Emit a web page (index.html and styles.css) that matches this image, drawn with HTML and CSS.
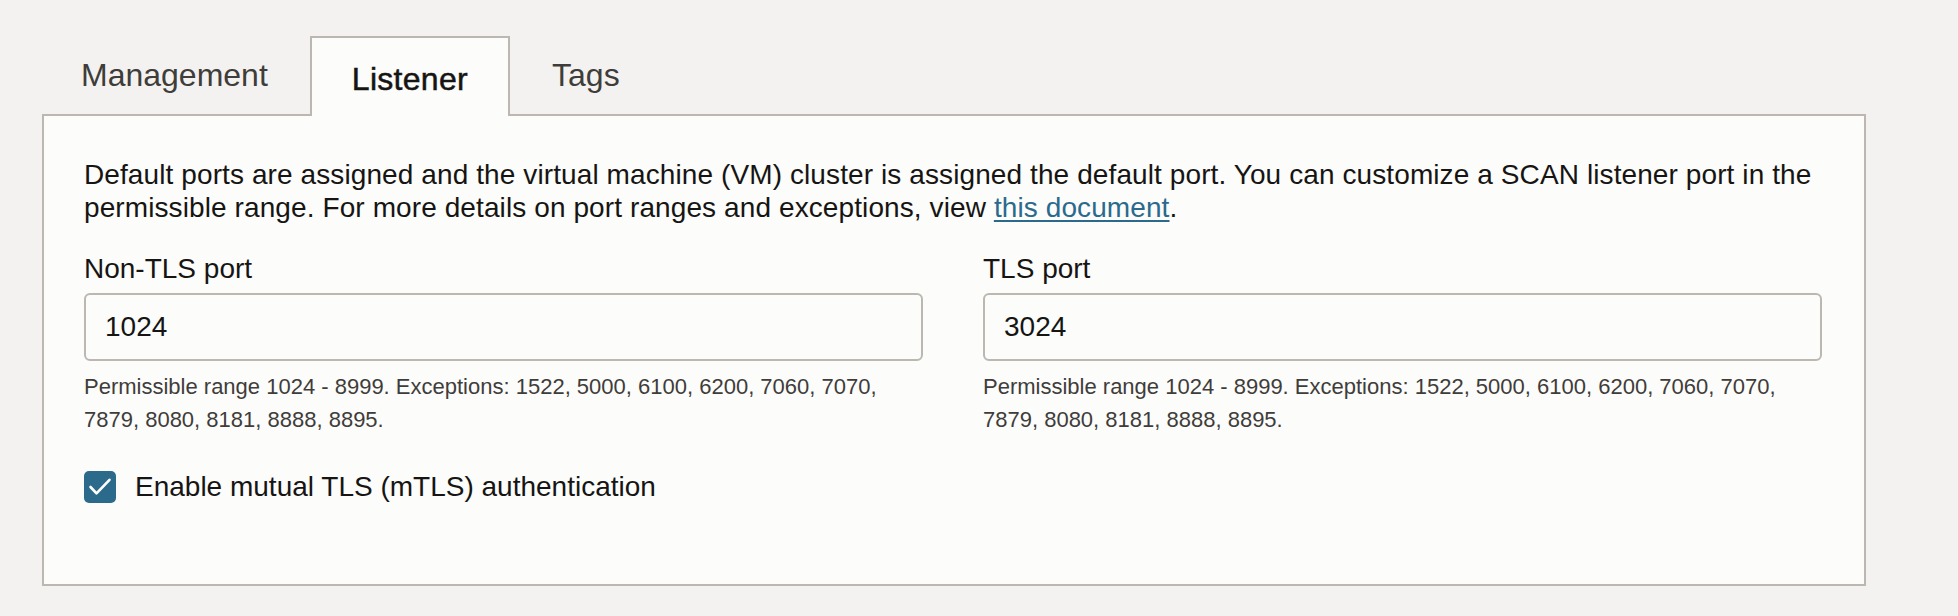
FILE: index.html
```html
<!DOCTYPE html>
<html lang="en">
<head>
<meta charset="utf-8">
<title>Listener</title>
<link rel="stylesheet" href="styles.css">
</head>
<body>
<div class="page">
  <div class="tabs">
    <div class="tab">Management</div>
    <div class="tab tab-active">Listener</div>
    <div class="tab">Tags</div>
  </div>
  <div class="panel">
    <p class="intro">Default ports are assigned and the virtual machine (VM) cluster is assigned the default port. You can customize a SCAN listener port in the permissible range. For more details on port ranges and exceptions, view <a class="link" href="#">this document</a>.</p>
    <div class="fields">
      <div class="field">
        <label class="label" for="nontls">Non-TLS port</label>
        <input class="input" id="nontls" type="text" value="1024">
        <p class="help">Permissible range 1024 - 8999. Exceptions: 1522, 5000, 6100, 6200, 7060, 7070, 7879, 8080, 8181, 8888, 8895.</p>
      </div>
      <div class="field">
        <label class="label" for="tls">TLS port</label>
        <input class="input" id="tls" type="text" value="3024">
        <p class="help">Permissible range 1024 - 8999. Exceptions: 1522, 5000, 6100, 6200, 7060, 7070, 7879, 8080, 8181, 8888, 8895.</p>
      </div>
    </div>
    <label class="check">
      <span class="box"><svg width="32" height="32" viewBox="0 0 32 32"><path d="M6.5 16 L12.5 22.3 L25.5 8.8" fill="none" stroke="#ffffff" stroke-width="2.6" stroke-linecap="round" stroke-linejoin="round"/></svg></span>
      <span class="check-label">Enable mutual TLS (mTLS) authentication</span>
    </label>
  </div>
</div>
</body>
</html>
```

FILE: styles.css
```css
html, body {
  margin: 0;
  padding: 0;
}

body {
  background: #f3f2f0;
  font-family: "Liberation Sans", Arial, sans-serif;
  color: #161513;
}

.page {
  padding: 36px 92px 30px 42px;
}

.tabs {
  display: flex;
  margin-left: -3px;
  margin-bottom: -2px;
}

.tab {
  box-sizing: border-box;
  height: 80px;
  border: 2px solid transparent;
  border-bottom: 0;
  padding: 21px 40px 0 40px;
  font-size: 32px;
  line-height: 32px;
  color: #3f3d3a;
  white-space: nowrap;
}

.tab-active {
  position: relative;
  z-index: 1;
  background: #fcfcfb;
  border-color: #bcb7b0;
  padding-top: 25px;
  color: #161513;
  -webkit-text-stroke: 0.5px #161513;
  letter-spacing: 0.3px;
}

.panel {
  background: #fcfcfb;
  border: 2px solid #bcb7b0;
  padding: 42px 42px 81px 40px;
}

.intro {
  margin: 0;
  font-size: 28px;
  line-height: 33px;
  letter-spacing: 0.1px;
}

.link {
  color: #2b6a8d;
  text-decoration: underline;
  text-underline-offset: 3px;
  text-decoration-thickness: 1.5px;
}

.fields {
  display: grid;
  grid-template-columns: 1fr 1fr;
  column-gap: 60px;
  margin-top: 28px;
}

.field {
  display: flex;
  flex-direction: column;
}

.label {
  font-size: 28px;
  line-height: 33px;
}

.input {
  box-sizing: border-box;
  margin-top: 8px;
  height: 68px;
  width: 100%;
  border: 2px solid #bcb7b0;
  border-radius: 6px;
  background: #fcfcfb;
  padding: 0 19px;
  font-family: "Liberation Sans", Arial, sans-serif;
  font-size: 28px;
  color: #161513;
  outline: none;
}

.help {
  margin: 9px 0 0 0;
  font-size: 22px;
  line-height: 33px;
  color: #3f3d3a;
}

.check {
  display: flex;
  align-items: center;
  gap: 19px;
  margin-top: 34px;
}

.box {
  display: flex;
  width: 32px;
  height: 32px;
  border-radius: 5px;
  background: #2c6a8b;
}

.check-label {
  font-size: 28px;
  line-height: 33px;
}
```
